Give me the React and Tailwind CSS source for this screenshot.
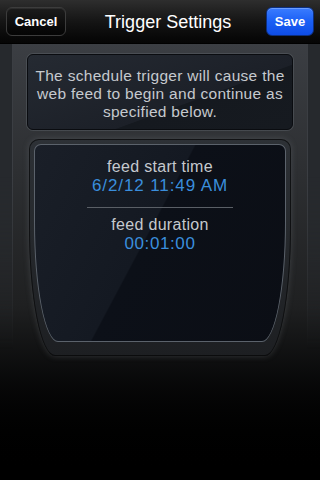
const App = () => {
  return (
    <div className="w-[320px] h-[480px] flex flex-col overflow-hidden bg-black font-['Liberation_Sans',Arial,sans-serif]">
      {/* nav bar */}
      <div className="h-[44px] shrink-0 flex items-center justify-between px-[6px] bg-gradient-to-b from-[#2e2e2e] via-[#151515] to-[#050505] border-b border-[#000]">
        <button className="h-[29px] w-[60px] rounded-[6px] border border-[#3c3c3c] bg-gradient-to-b from-[#1c1c1c] to-[#050505] text-white text-[13px] font-bold shadow-[inset_0_1px_0_rgba(255,255,255,0.08)]">
          Cancel
        </button>
        <h1 className="text-white text-[18px] pt-[2px] pl-[4px]">Trigger Settings</h1>
        <button className="h-[29px] w-[48px] rounded-[6px] border border-[#0c2f80] bg-gradient-to-b from-[#3a7cff] via-[#1a5ff5] to-[#0f4de6] text-white text-[13px] font-bold shadow-[inset_0_1px_0_rgba(255,255,255,0.25)]">
          Save
        </button>
      </div>

      {/* body */}
      <div className="flex-1 flex bg-gradient-to-b from-[#3b3e43] via-[#1f2021] via-60% to-black">
        <div className="w-[13px] bg-[#26292d] border-r border-[#4a4d52]/60 [mask-image:linear-gradient(to_bottom,black_30%,transparent_70%)]" />
        <div className="flex-1 flex flex-col px-[14px] pt-[10px]">
          {/* info box */}
          <div className="h-[76px] rounded-[6px] border border-[#0a0c10] shadow-[0_0_0_1px_rgba(90,95,102,0.5)] bg-[linear-gradient(160deg,#252a32_0%,#1c2028_62%,#15191f_62.5%,#161a20_100%)] flex items-center justify-center px-[4px] pt-[3px]">
            <p className="text-center text-[15.5px] leading-[18px] tracking-[0.3px] text-[#c5c9ce]">
              The schedule trigger will cause the web feed to begin and continue as specified below.
            </p>
          </div>

          {/* start time panel */}
          <div className="mt-[9px] mx-[2px] h-[217px] p-[5px] pb-[14px] bg-gradient-to-b from-[#2d3136] to-[#1d1f22] rounded-t-[10px] rounded-b-[26px_130px] shadow-[0_0_6px_rgba(120,125,132,0.35),inset_0_0_0_1px_rgba(0,0,0,0.6)]">
            <div className="h-full rounded-t-[7px] rounded-b-[24px_120px] border border-[#5b626b] bg-[linear-gradient(118deg,#1a1f28_0%,#141922_45%,#0c1018_45.5%,#0b0e15_100%)] flex flex-col items-center pt-[12px] text-center">
              <div className="text-[16px] leading-[19px] tracking-[0.3px] text-[#c5c9ce]">feed start time</div>
              <div className="text-[17px] leading-[20px] tracking-[0.9px] text-[#3a8edc]">6/2/12 11:49 AM</div>
              <div className="w-[146px] h-px bg-[#5a5f66] mt-[11px] mb-[7px]" />
              <div className="text-[16px] leading-[19px] tracking-[0.3px] text-[#c5c9ce]">feed duration</div>
              <div className="text-[17px] leading-[19px] tracking-[0.6px] text-[#3a8edc]">00:01:00</div>
            </div>
          </div>
        </div>
        <div className="w-[13px] bg-[#26292d] border-l border-[#4a4d52]/60 [mask-image:linear-gradient(to_bottom,black_30%,transparent_70%)]" />
      </div>
    </div>
  );
};

export default App;
